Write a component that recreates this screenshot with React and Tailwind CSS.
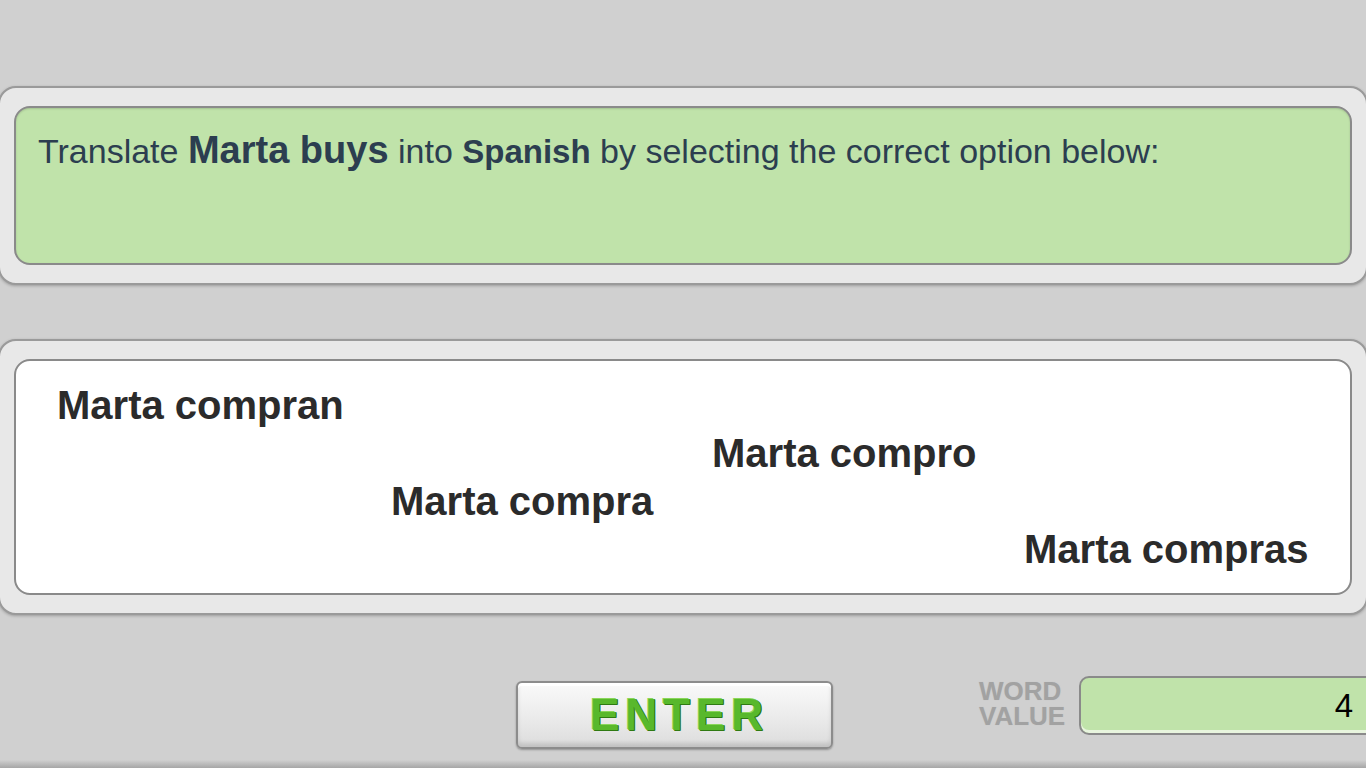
import React from 'react'

const font = { fontFamily: '"Liberation Sans", Arial, sans-serif' }

function Panel({ children, className = '' }) {
  return (
    <div className={`mx-[-2px] rounded-[18px] border-2 border-[#9a9a9a] bg-[#e8e8e8] px-[14px] py-[18px] shadow-[0_1px_3px_rgba(0,0,0,0.25)] ${className}`}>
      {children}
    </div>
  )
}

const options = [
  { text: 'Marta compran', indent: 'ml-[41px]' },
  { text: 'Marta compro', indent: 'ml-[696px]' },
  { text: 'Marta compra', indent: 'ml-[375px]' },
  { text: 'Marta compras', indent: 'ml-[1008px]' },
]

export default function App() {
  return (
    <div className="relative h-[768px] w-[1366px] overflow-hidden bg-[#d0d0d0]" style={font}>
      <div className="flex flex-col pt-[86px]">
        <Panel className="h-[199px]">
          <div className="h-full rounded-[16px] border-2 border-[#8a8a8a] bg-[#c0e3aa] px-[22px] pt-[22px] shadow-[inset_0_1px_2px_rgba(0,0,0,0.15)]">
            <p className="text-[34px] leading-[40px] text-[#2c3e50]">
              Translate <b className="text-[38px]">Marta buys</b> into <b className="text-[33px]">Spanish</b> by selecting the correct option below:
            </p>
          </div>
        </Panel>

        <Panel className="mt-[54px] h-[276px]">
          <div className="h-full rounded-[16px] border-2 border-[#8a8a8a] bg-white pt-[20px]">
            {options.map((o) => (
              <div key={o.text} className="flex">
                <span className={`${o.indent} cursor-pointer text-[40px] font-bold leading-[48px] text-[#2b2b2b]`}>
                  {o.text}
                </span>
              </div>
            ))}
          </div>
        </Panel>

        <div className="flex items-start">
          <button className="ml-[516px] mt-[66px] flex h-[68px] w-[317px] shrink-0 items-center justify-center rounded-[6px] border-2 border-[#8c8c8c] bg-gradient-to-b from-[#fafafa] via-[#ececec] to-[#dcdcdc] pl-[10px] shadow-[inset_0_3px_0_#ffffff,inset_0_-4px_4px_rgba(0,0,0,0.12),0_1px_2px_rgba(0,0,0,0.3)]">
            <span className="text-[44px] font-bold leading-none tracking-[6px] text-[#58b82c] [text-shadow:1px_1px_0_#2f7a12,-1px_-1px_0_#8ad65a,1px_0_0_#3f8f1c]">
              ENTER
            </span>
          </button>
          <div className="ml-[146px] mt-[64px] flex shrink-0 flex-col text-[26px] font-bold leading-[25px] text-[#a2a2a2] [text-shadow:0_0_1px_#bdbdbd]">
            <span>WORD</span>
            <span>VALUE</span>
          </div>
          <div className="ml-[14px] mt-[61px] flex h-[59px] w-[300px] shrink-0 items-center justify-end rounded-[10px] border-2 border-[#8a8a8a] bg-[#c0e3aa] pr-[24px] shadow-[inset_0_-3px_0_#e8f5de]">
            <span className="text-[33px] text-black">4</span>
          </div>
        </div>
      </div>
      <div className="absolute bottom-0 left-0 h-[8px] w-full bg-gradient-to-b from-[#d0d0d0] to-[#a6a6a6]" />
    </div>
  )
}
